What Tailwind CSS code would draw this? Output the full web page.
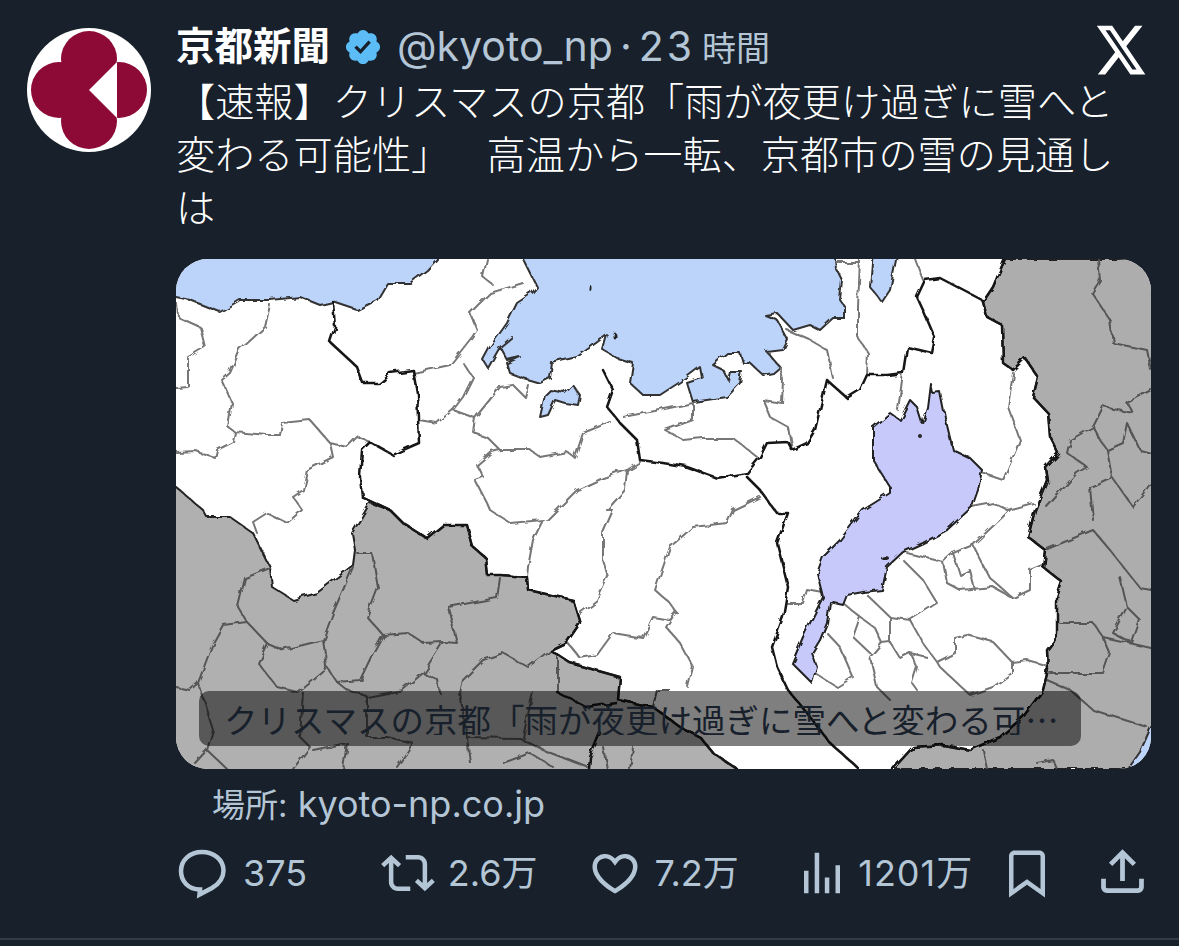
<!DOCTYPE html>
<html lang="ja">
<head>
  <meta charset="UTF-8" />
  <title>京都新聞</title>
  <script src="https://cdn.jsdelivr.net/npm/@tailwindcss/browser@4"></script>
</head>
<body class="bg-[#17202b]">
  <div class="w-[1179px] h-[940px] border-b-2 border-[#323c47] bg-[#17202b] flex overflow-hidden font-['Inter','Noto_Sans_CJK_JP',sans-serif]">

    <!-- avatar -->
    <div class="w-[176px] shrink-0 pl-[27px] pt-[28px]">
      <svg class="w-[124px] h-[124px]" viewBox="27 28 124 124">
        <circle cx="89" cy="90" r="62" fill="#fff"/>
        <g fill="#8c0a35">
          <circle cx="89" cy="59" r="28"/>
          <circle cx="89" cy="121" r="28"/>
          <circle cx="59" cy="90" r="28"/>
          <circle cx="119" cy="90" r="28"/>
          <polygon points="89,59 119,90 89,121 59,90"/>
        </g>
        <polygon points="89,90 117,62 117,118" fill="#fff"/>
      </svg>
    </div>

    <div class="w-[975px] shrink-0">
      <!-- header -->
      <div class="h-[53px] mt-[20px] flex items-center leading-none whitespace-nowrap">
        <span class="font-bold text-white text-[38.5px]">京都新聞</span>
        <svg class="w-[40px] h-[40px] ml-[13px] mr-[14px]" viewBox="0 0 24 24" fill="#5cbcf5"><path d="M22.25 12c0-1.43-.88-2.67-2.19-3.34.46-1.39.2-2.9-.81-3.91s-2.52-1.27-3.91-.81c-.66-1.31-1.91-2.19-3.34-2.19s-2.67.88-3.33 2.19c-1.4-.46-2.91-.2-3.92.81s-1.26 2.52-.8 3.91c-1.31.67-2.2 1.91-2.2 3.34s.89 2.67 2.2 3.34c-.46 1.39-.21 2.9.8 3.91s2.52 1.26 3.91.81c.67 1.31 1.91 2.19 3.34 2.19s2.68-.88 3.34-2.19c1.39.45 2.9.2 3.91-.81s1.27-2.52.81-3.91c1.31-.67 2.19-1.91 2.19-3.34zm-11.71 4.2L6.8 12.46l1.41-1.42 2.26 2.26 4.8-5.23 1.47 1.36-6.2 6.77z"/></svg>
        <span class="text-[#b4c6d6] text-[41px] flex items-baseline"><span>@kyoto_np</span><span class="ml-[7px]">·</span><span class="ml-[7px] tracking-[3px]">23</span><span class="ml-[7px] text-[34px]">時間</span></span>
        <svg class="w-[54px] h-[60px] ml-auto mr-[3px] self-start" viewBox="0 0 24 24" fill="#fff" preserveAspectRatio="none"><path d="M18.244 2.25h3.308l-7.227 8.26 8.502 11.24H16.17l-5.214-6.817L4.99 21.75H1.68l7.73-8.835L1.254 2.25H8.08l4.713 6.231zm-1.161 17.52h1.833L7.084 4.126H5.117z"/></svg>
      </div>

      <!-- tweet text -->
      <div class="text-[39.2px] leading-[53px] font-light text-white whitespace-nowrap font-['Noto_Sans_CJK_JP',sans-serif]">
        <p>【速報】クリスマスの京都「雨が夜更け過ぎに雪へと</p>
        <p>変わる可能性」　 <span class="ml-[8px]">高温から一転、京都市の雪の見通し</span></p>
        <p>は</p>
      </div>

      <!-- card -->
      <div class="relative mt-[27px] w-[975px] h-[510px] rounded-[32px] overflow-hidden bg-white">
        <svg class="w-full h-full block" viewBox="176 259 975 510" fill="none" stroke-linejoin="round" stroke-linecap="round">
          <defs>
            <filter id="rough" x="165" y="245" width="1000" height="540" filterUnits="userSpaceOnUse">
              <feTurbulence type="fractalNoise" baseFrequency="0.09" numOctaves="2" seed="4" result="noise"/>
              <feDisplacementMap in="SourceGraphic" in2="noise" scale="6"/>
              <feGaussianBlur stdDeviation="0.5"/>
            </filter>
          </defs>

          <g filter="url(#rough)">
            <!-- grey neighbours -->
            <g fill="#b0b0b0" stroke="#222" stroke-width="2">
              <polygon fill="#adadad" points="1005,259 993,287 983,302 987,317 1002,325 1003,363 1013,370 1025,358 1038,377 1033,397 1048,413 1050,437 1058,453 1045,467 1047,480 1035,510 1028,537 1045,550 1043,567 1062,582 1057,597 1057,637 1047,650 1048,670 1043,690 1023,717 1000,737 970,750 943,745 913,747 893,769 1160,769 1160,259"/>
              <polygon points="170,484 176,487 203,510 207,517 230,517 253,533 270,567 272,587 293,600 317,593 353,565 355,550 352,533 360,520 370,503 390,510 403,523 427,538 443,525 467,525 473,547 485,557 487,575 500,575 527,577 528,590 573,600 580,623 567,642 550,650 570,663 620,677 618,700 653,707 680,727 700,737 713,753 737,769 737,775 170,775"/>
            </g>

            <!-- sea -->
            <g fill="#bcd3fa" stroke="#333" stroke-width="2">
              <polygon points="170,250 170,297 176,297 190,300 220,312 240,300 270,300 300,297 320,305 333,302 357,310 377,300 387,283 410,283 427,270 437,259 437,250"/>
              <polygon points="523,250 523,259 530,273 537,287 532,293 517,303 507,323 490,347 483,360 488,368 500,347 512,337 500,347 507,360 520,357 507,363 510,373 523,378 540,383 550,378 552,363 577,357 600,340 607,335 603,350 617,358 633,363 630,383 643,395 660,395 680,382 700,367 702,378 687,383 693,402 727,397 740,383 742,372 730,372 728,380 723,370 713,365 727,353 740,353 743,363 750,363 763,375 773,373 780,367 767,352 783,350 788,340 777,320 765,315 777,313 793,330 810,325 820,330 833,318 845,318 845,307 840,300 842,280 837,270 835,250"/>
              <polygon points="873,250 870,287 882,302 890,290 898,250"/>
              <polygon points="1151,727 1140,752 1128,769 1160,775 1160,727"/>
              <polygon points="540,417 545,395 550,390 565,393 573,385 580,395 578,405 565,403 555,400 548,415"/>
            </g>

            <!-- municipal borders -->
            <g stroke="#777" stroke-width="2">
              <polyline points="177,303 178,317 200,327 205,347 188,357 188,387 176,388"/>
              <polyline points="270,305 265,327 240,350 230,373 222,380 232,403 228,427 235,432 267,435 280,435 282,423 310,420 330,443 347,447 357,437 370,442"/>
              <polyline points="235,432 233,442 217,450 215,458 197,452 176,453"/>
              <polyline points="330,443 333,457 307,470 303,490 293,497 302,510 287,523 267,513 253,522 257,533"/>
              <polyline points="413,373 450,365 472,337 477,330 470,313 490,293 523,283"/>
              <polyline points="487,259 483,277 493,285"/>
              <polyline points="463,363 473,377 463,397 453,410 437,423 419,420"/>
              <polyline points="453,410 475,418 500,387 513,385 525,397 528,385"/>
              <polyline points="475,418 473,432 487,437 500,450 530,450 540,457 567,452 575,458 583,433 610,422"/>
              <polyline points="500,450 492,452 477,465 483,477 475,480 487,503 490,510 510,523 543,520 533,540 528,567 527,577"/>
              <polyline points="640,462 627,470 603,478 577,490 547,520"/>
              <polyline points="627,470 625,490 607,510 613,510 603,533 603,560 608,577 597,600 580,613"/>
              <polyline points="567,642 580,658 597,655 613,633 643,638 653,617 670,620 677,613 667,628 680,643 693,667 688,687"/>
              <polyline points="760,497 733,510 727,523 693,527 670,547 655,590 670,603 677,613"/>
              <polyline points="693,403 693,420 665,430 683,440 703,438 733,438 757,457"/>
              <polyline points="623,417 660,410 693,403"/>
              <polyline points="763,400 782,403 783,380 780,367"/>
              <polyline points="763,400 770,417 788,427 792,450"/>
              <polyline points="787,330 810,340 827,350 833,378"/>
              <polyline points="860,259 858,307 858,337 868,353 867,375"/>
              <polyline points="837,263 860,263"/>
              <polyline points="915,259 923,280"/>
              <polyline points="903,373 898,410"/>
              <polyline points="1013,373 1008,407 1020,440 1013,457 1003,480 982,473"/>
              <polyline points="972,507 993,503 1007,510 1033,503"/>
              <polyline points="907,553 943,562 953,553 973,545 1010,510"/>
              <polyline points="973,545 990,578 1013,598 1030,590 1030,570 1042,565"/>
              <polyline points="943,562 947,583 960,590 993,587 1013,598"/>
              <polyline points="867,595 890,617 910,620 937,603 923,580 903,560"/>
              <polyline points="910,620 923,643 937,662 955,653 955,638 967,635 993,642 1012,662 1012,673 993,687 970,695 940,667 937,662"/>
              <polyline points="1012,662 1027,660 1045,665"/>
              <polyline points="890,617 890,642 900,658 910,653 927,657"/>
              <polyline points="910,653 917,667 912,683 917,690"/>
              <polyline points="882,643 870,657 877,687 890,700"/>
              <polyline points="843,603 860,617 853,637 870,653"/>
              <polyline points="827,633 840,647 853,677 837,687 815,673"/>
              <polyline points="787,603 803,603 807,590 823,593"/>
              <polyline points="953,553 960,575 970,570 975,590"/>
              <polyline points="860,617 875,628 882,643 890,642"/>
            </g>
            <g stroke="#555" stroke-width="2">
              <polyline points="1098,259 1100,280 1092,293 1110,320 1113,343 1147,350 1151,370"/>
              <polyline points="1151,390 1127,403 1133,413 1103,407 1093,427 1070,440 1067,453 1087,467 1077,473 1047,507"/>
              <polyline points="1093,427 1100,440 1107,450 1112,477 1090,487 1093,520"/>
              <polyline points="1107,450 1123,443 1127,423 1140,450 1151,453"/>
              <polyline points="1112,477 1133,507 1151,483"/>
              <polyline points="1045,550 1093,530 1110,550 1140,588 1151,590"/>
              <polyline points="1120,577 1127,607 1113,633 1132,643 1140,620 1127,607"/>
              <polyline points="1060,623 1093,623 1103,637 1110,653 1103,673 1050,673"/>
              <polyline points="1103,637 1151,648"/>
              <polyline points="1047,680 1070,690 1093,710 1147,727"/>
              <polyline points="983,750 987,769"/>
              <polyline points="1037,763 1053,760 1057,769"/>
              <polyline points="270,568 245,578 238,607 247,622 223,625 213,643 198,683 190,690 176,687"/>
              <polyline points="247,622 267,643 283,650 323,640 333,613 353,567"/>
              <polyline points="267,643 258,663 277,687 297,692 327,667 323,640"/>
              <polyline points="327,667 337,682 360,680 373,653 383,635 367,617 378,588 372,553 357,553"/>
              <polyline points="383,635 408,633 423,643 443,642 423,673 438,680 440,693"/>
              <polyline points="443,642 457,643 448,607 497,598 500,578"/>
              <polyline points="423,673 403,690 367,697 347,690 337,682"/>
              <polyline points="550,650 528,667 503,653 483,660 463,680 460,693 467,737 470,763"/>
              <polyline points="558,657 558,692"/>
              <polyline points="303,692 300,737 310,747 293,769"/>
              <polyline points="367,697 367,737 387,737 413,743 397,767"/>
              <polyline points="347,743 343,769"/>
              <polyline points="347,743 313,750"/>
              <polyline points="198,683 213,730 207,750 227,769"/>
              <polyline points="207,750 195,763"/>
              <polyline points="503,763 530,753 553,767"/>
              <polyline points="467,737 520,738 543,750 587,767"/>
              <polyline points="533,692 523,737"/>
              <polyline points="603,747 607,769"/>
              <polyline points="633,747 630,769"/>
              <polyline points="653,707 657,690 670,690"/>
            </g>

            <!-- lake -->
            <polygon fill="#c7c9fb" stroke="#222" stroke-width="2" points="930,383 932,393 940,392 945,417 953,450 970,458 982,470 978,490 972,507 947,530 923,543 903,552 887,567 882,590 863,592 847,595 843,605 830,602 827,623 820,640 812,653 817,667 812,683 792,663 803,637 813,617 823,597 817,573 823,557 840,540 863,510 890,493 890,487 873,460 873,427 890,413 900,420 910,400 917,407 922,423 927,407"/>

            <!-- prefecture borders -->
            <g stroke="#181818" stroke-width="2.5">
              <polyline points="333,302 335,327 330,342 357,367 363,383 378,383 390,373 413,370 417,393 418,417 419,443 403,450 393,455 370,442 362,450 360,477 362,497 390,510"/>
              <polyline points="603,370 613,390 607,407 620,423 637,440 640,460 663,463 687,467 717,478 747,473 760,457 767,443 788,442 792,450 807,443 815,430 827,380 847,398 860,390 867,375 887,375 903,373 907,347 932,353 935,338 923,310 917,297 925,280 940,278 982,300"/>
              <polyline points="747,477 760,490 777,513 788,513 777,543 788,587 783,617 772,647 777,667 788,690 807,713 830,743 857,767"/>
              <polyline points="362,497 390,510 403,523 427,538 443,525 467,525 473,547 485,557 487,575 500,575 527,577 528,590 573,600 580,623 567,642 550,650 570,663 620,677 618,700 653,707 680,727 700,737 713,753 737,769"/>
              <polyline points="982,300 983,302 987,317 1002,325 1003,363 1013,370 1025,358 1038,377 1033,397 1048,413 1050,437 1058,453 1045,467 1047,480 1035,510 1028,537 1045,550 1043,567 1062,582 1057,597 1057,637 1047,650 1048,670 1043,690 1023,717 1000,737 970,750 943,745 913,747 893,769"/>
              <polyline points="1005,259 993,287 983,302"/>
              <polyline points="557,692 587,707 617,703"/>
              <polyline points="600,733 590,757 589,769"/>
            </g>

            <!-- islets -->
            <g fill="#222">
              <ellipse cx="591" cy="289" rx="1.5" ry="3"/>
              <ellipse cx="615" cy="336" rx="1.5" ry="3.5"/>
              <circle cx="920" cy="436" r="2"/>
              <ellipse cx="885" cy="558" rx="4" ry="2"/>
            </g>
          </g>
        </svg>

        <!-- caption over the picture -->
        <div class="absolute left-[23px] top-[432px] w-[882px] h-[55px] rounded-[10px] bg-black/50 pl-[25px] pr-[22px] flex items-center">
          <span class="truncate text-[33.5px] leading-none text-[#17202b] font-['Noto_Sans_CJK_JP',sans-serif]">クリスマスの京都「雨が夜更け過ぎに雪へと変わる可能性」　高温から一転、京都市の雪の見通しは</span>
        </div>
      </div>

      <!-- source -->
      <p class="mt-[14px] pl-[36px] h-[43px] text-[36px] leading-[43px] text-[#b4c6d6] whitespace-nowrap"><span class="text-[33px]">場所:</span> kyoto-np.co.jp</p>

      <!-- actions -->
      <div class="mt-[20px] flex text-[#b4c6d6] text-[36px] leading-none">
        <div class="w-[207px] flex items-center gap-[13px]">
          <svg class="w-[54px] h-[54px]" viewBox="0 0 54 54" fill="none" stroke="currentColor" stroke-width="4.5"><path d="M24 43.5C12 43.5 5 35 5 25C5 14 14 6 26 6C38 6 47.5 14 47.5 24.5C47.5 33 42 38.5 36 42L23.5 48.5Z"/></svg>
          <span>375</span>
        </div>
        <div class="w-[209px] flex items-center gap-[13px]">
          <svg class="w-[54px] h-[54px]" viewBox="0 0 24 24" fill="currentColor"><path d="M4.5 3.88l4.432 4.14-1.364 1.46L5.5 7.55V16c0 1.1.896 2 2 2H13v2H7.5c-2.209 0-4-1.79-4-4V7.55L1.432 9.48.068 8.02 4.5 3.88zM16.5 6H11V4h5.5c2.209 0 4 1.79 4 4v8.45l2.068-1.93 1.364 1.46-4.432 4.14-4.432-4.14 1.364-1.46 2.068 1.93V8c0-1.1-.896-2-2-2z"/></svg>
          <span>2.6<span class="text-[36px]">万</span></span>
        </div>
        <div class="w-[210px] flex items-center gap-[13px]">
          <svg class="w-[54px] h-[54px]" viewBox="0 0 24 24" fill="currentColor"><path d="M16.697 5.5c-1.222-.06-2.679.51-3.89 2.16l-.805 1.09-.806-1.09C9.984 6.01 8.526 5.44 7.304 5.5c-1.243.07-2.349.78-2.91 1.91-.552 1.12-.633 2.78.479 4.82 1.074 1.97 3.257 4.27 7.129 6.61 3.87-2.34 6.052-4.64 7.126-6.61 1.111-2.04 1.03-3.7.477-4.82-.561-1.13-1.666-1.84-2.908-1.91zm4.187 7.69c-1.351 2.48-4.001 5.12-8.379 7.67l-.503.3-.504-.3c-4.379-2.55-7.029-5.19-8.382-7.67-1.36-2.5-1.41-4.86-.514-6.67.887-1.79 2.647-2.91 4.601-3.01 1.651-.09 3.368.56 4.798 2.01 1.429-1.45 3.146-2.1 4.796-2.01 1.954.1 3.714 1.22 4.601 3.01.896 1.81.846 4.17-.514 6.67z"/></svg>
          <span>7.2<span class="text-[36px]">万</span></span>
        </div>
        <div class="w-[207px] flex items-center gap-[9px]">
          <svg class="w-[54px] h-[54px]" viewBox="0 0 24 24" fill="currentColor"><path d="M8.75 21V3h2v18h-2zM18 21V8.5h2V21h-2zM4 21l.004-10h2L6 21H4zm9.248 0v-7h2v7h-2z"/></svg>
          <span class="tracking-[1px]">1201<span class="text-[36px]">万</span></span>
        </div>
        <div class="w-[95px] flex items-center">
          <svg class="w-[54px] h-[54px]" viewBox="0 0 24 24" fill="currentColor"><path d="M4 4.5C4 3.12 5.119 2 6.5 2h11C18.881 2 20 3.12 20 4.5v18.44l-8-5.71-8 5.71V4.5zM6.5 4c-.276 0-.5.22-.5.5v14.56l6-4.29 6 4.29V4.5c0-.28-.224-.5-.5-.5h-11z"/></svg>
        </div>
        <div class="flex items-center">
          <svg class="w-[57px] h-[57px] -mt-[3px]" viewBox="0 0 24 24" fill="currentColor"><path d="M12 2.59l5.7 5.7-1.41 1.42L13 6.41V16h-2V6.41l-3.3 3.3-1.41-1.42L12 2.59zM21 15l-.02 3.51c0 1.38-1.12 2.49-2.5 2.49H5.5C4.11 21 3 19.88 3 18.5V15h2v3.5c0 .28.22.5.5.5h12.98c.28 0 .5-.22.5-.5L19 15h2z"/></svg>
        </div>
      </div>
    </div>
  </div>
</body>
</html>
